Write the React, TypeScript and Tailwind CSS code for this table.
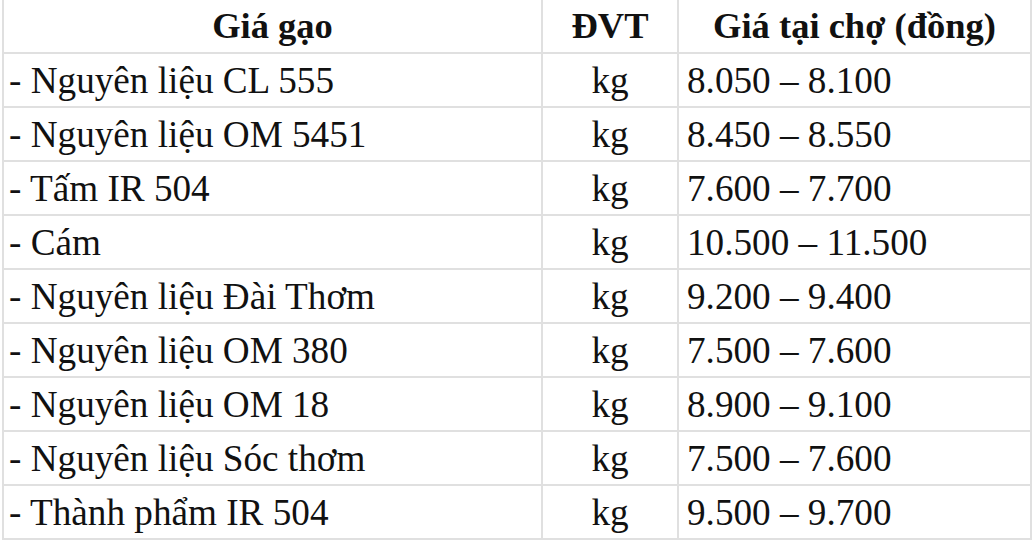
import React from 'react';

type Row = { name: string; unit: string; price: string };

const rows: Row[] = [
  { name: '- Nguyên liệu CL 555', unit: 'kg', price: '8.050 – 8.100' },
  { name: '- Nguyên liệu OM 5451', unit: 'kg', price: '8.450 – 8.550' },
  { name: '- Tấm IR 504', unit: 'kg', price: '7.600 – 7.700' },
  { name: '- Cám', unit: 'kg', price: '10.500 – 11.500' },
  { name: '- Nguyên liệu Đài Thơm', unit: 'kg', price: '9.200 – 9.400' },
  { name: '- Nguyên liệu OM 380', unit: 'kg', price: '7.500 – 7.600' },
  { name: '- Nguyên liệu OM 18', unit: 'kg', price: '8.900 – 9.100' },
  { name: '- Nguyên liệu Sóc thơm', unit: 'kg', price: '7.500 – 7.600' },
  { name: '- Thành phẩm IR 504', unit: 'kg', price: '9.500 – 9.700' },
];

const cell = 'h-[54px] flex items-center border-b-2 border-r-2 border-[#e0e0e0]';

export default function App() {
  return (
    <div className="w-[1034px] h-[540px] overflow-hidden bg-white font-['Liberation_Serif','Times_New_Roman',serif] text-[#111]">
      <div className="ml-[2px] grid grid-cols-[539px_136px_353px] border-l-2 border-[#e0e0e0]">
        {/* Header */}
        <div className={`${cell} justify-center font-bold text-[36.5px]`}>Giá gạo</div>
        <div className={`${cell} justify-center font-bold text-[36.5px]`}>ĐVT</div>
        <div className={`${cell} justify-center font-bold text-[36.5px]`}>Giá tại chợ (đồng)</div>

        {rows.map((r) => (
          <React.Fragment key={r.name}>
            <div className={`${cell} pl-[5px] pt-[2px] text-[37.2px]`}>{r.name}</div>
            <div className={`${cell} justify-center pt-[2px] text-[37.2px]`}>{r.unit}</div>
            <div className={`${cell} pl-[8px] pt-[2px] text-[37.2px]`}>{r.price}</div>
          </React.Fragment>
        ))}
      </div>
    </div>
  );
}
